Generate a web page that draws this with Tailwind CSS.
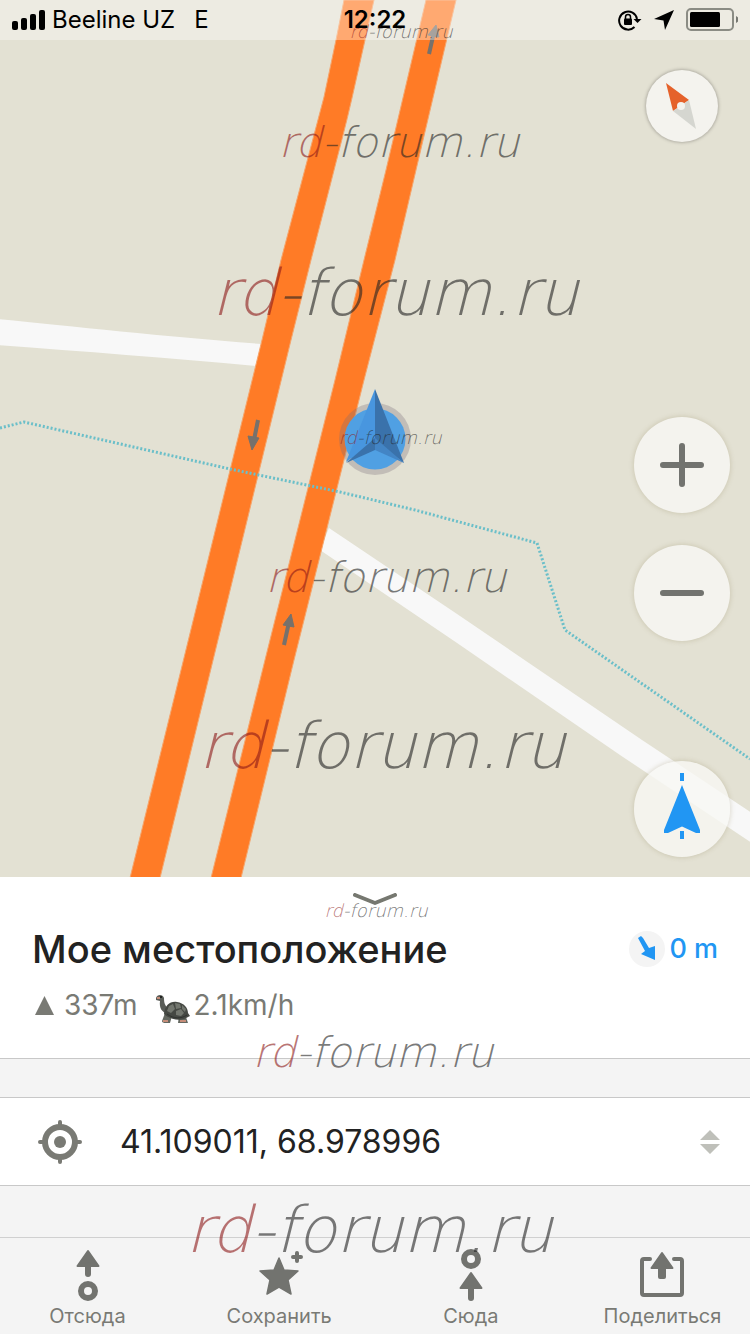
<!DOCTYPE html>
<html lang="ru">
<head>
<meta charset="utf-8">
<meta name="viewport" content="width=device-width, initial-scale=1">
<title>Мое местоположение</title>
<script src="https://cdn.jsdelivr.net/npm/@tailwindcss/browser@4"></script>
</head>
<body class="bg-[#f4f4f4] font-[Inter,'Noto_Sans',sans-serif] text-[#222]">
<div class="relative flex min-h-screen flex-col overflow-hidden">

  <!-- Map -->
  <main class="relative flex flex-1 flex-col bg-[#e3e1d3]">
    <svg class="absolute inset-0 h-full w-full" viewBox="0 0 750 877" preserveAspectRatio="xMidYMid slice" aria-hidden="true">
      <path d="M-2 319C70 326 170 337 262 344L257 366C170 358 80 351-2 345Z" fill="#f8f8f8"/>
      <path d="M329 528L460 616L642 740L752 813V843L620 755L460 645L320 550Z" fill="#f8f8f8"/>
      <g fill="#ff7b26" stroke="#f5a56c" stroke-width="1">
        <path d="M344 0H374L365 40L352 98C346 125 338 154 331 182L311 260L291 340L160 878H130L262 340L281 260L324 97L336 40Z"/>
        <path d="M426 0H456L416 170L395 260L364 380L294 660L241 878H211L265 660L335 380L364 260L386 170Z"/>
      </g>
      <path d="M0 428L24 422L230 469L340 492L415 510L537 543L565 630L750 759" fill="none" stroke="#6bbfc9" stroke-width="3" stroke-dasharray="2 2"/>
      <g fill="#77716b" stroke="#77716b">
        <path d="M258 420L254 440" stroke-width="4"/><path d="M248 436L259 438L252 450Z" stroke-width="1"/>
        <path d="M284 645L289 622" stroke-width="4"/><path d="M283 625L294 627L291 614Z" stroke-width="1"/>
        <path d="M429 54L434 32" stroke-width="4"/><path d="M428 35L439 37L436 25Z" stroke-width="1"/>
      </g>
      <circle cx="375" cy="439" r="36" fill="#776b78" fill-opacity=".3"/>
      <circle cx="375" cy="439" r="30.500" fill="#50a0e3"/>
      <path d="M375 389L346 462L375 441Z" fill="#4896df"/>
      <path d="M375 389L404 463L375 441Z" fill="#3a72ab"/>
      <path d="M346 463L375 438V450Z" fill="#3a72ab"/>
      <path d="M375 438L404 463L375 450Z" fill="#4385c5"/>
    </svg>

    <header class="relative grid h-10 grid-cols-[1fr_auto_1fr] items-center bg-white/35 px-3 text-[24px] leading-8 text-black">
      <div class="flex items-center gap-[7px]">
        <svg width="33" height="20" viewBox="0 0 33 20" aria-hidden="true"><rect y="11" width="6" height="9" rx="2"/><rect x="9" y="8" width="6" height="12" rx="2"/><rect x="18" y="4" width="6" height="16" rx="2"/><rect x="27" width="6" height="20" rx="2"/></svg>
        <span>Beeline UZ</span><span class="pl-3">E</span>
      </div>
      <time class="font-semibold">12:22</time>
      <div class="flex items-center justify-end gap-3">
        <svg width="24" height="22" viewBox="0 0 24 22" fill="none" stroke="#000" stroke-width="2" aria-hidden="true"><path d="M16.500 18A9 9 0 1 1 19 10"/><path d="M15.500 10H23.500L19.500 14Z" fill="#000" stroke="none"/><rect x="6" y="9.500" width="8" height="6.500" rx="1" fill="#000" stroke="none"/><path d="M7.500 10V8A2.500 2.500 0 0 1 12.500 8V10" stroke-width="1.500"/></svg>
        <svg width="20" height="20" viewBox="0 0 20 20" aria-hidden="true"><path d="M20 0L11 20L9.500 10.500L0 9Z"/></svg>
        <svg width="52" height="24" viewBox="0 0 52 24" aria-hidden="true"><rect x="1" y="1" width="46" height="21" rx="4" fill="none" stroke="#8b8c84" stroke-width="2"/><rect x="4" y="4" width="30" height="15" rx="1.500"/><path d="M50 8Q56 11.500 50 15Z" fill="#777872"/></svg>
      </div>
    </header>

    <div class="relative mr-5 ml-auto flex w-24 flex-1 flex-col items-center pt-[30px] pb-5">
      <button aria-label="Компас" class="size-[72px] rounded-full bg-[#f4f3ee] shadow-[0_0_3px_1px_rgba(90,85,80,0.35)]">
        <svg viewBox="0 0 72 72" aria-hidden="true"><path d="M20 13L43 30L27 41Z" fill="#e5622b"/><path d="M27 41L43 30L50 59Z" fill="#d5d6d0"/><circle cx="35" cy="36" r="4" fill="#f4f3ee"/></svg>
      </button>
      <div class="mt-auto flex flex-col gap-8">
        <button aria-label="Приблизить" class="size-24 rounded-full bg-[#f4f3ee] shadow-[0_0_4px_1px_rgba(150,140,100,0.25)]">
          <svg viewBox="0 0 96 96" stroke="#72736f" stroke-width="6" stroke-linecap="round" aria-hidden="true"><path d="M29 48H67M48 29V67"/></svg>
        </button>
        <button aria-label="Отдалить" class="size-24 rounded-full bg-[#f4f3ee] shadow-[0_0_4px_1px_rgba(150,140,100,0.25)]">
          <svg viewBox="0 0 96 96" stroke="#72736f" stroke-width="6" stroke-linecap="round" aria-hidden="true"><path d="M29 48H67"/></svg>
        </button>
      </div>
      <button aria-label="Моя позиция" class="mt-[120px] size-24 rounded-full bg-[#f8f7f4]/80 shadow-[0_0_4px_1px_rgba(150,140,100,0.25)]">
        <svg viewBox="0 0 96 96" fill="#2196f3" aria-hidden="true"><path d="M46 12H50V20H46ZM46 70H50V78H46ZM48 24L66 69V72H62L48 65.500L34 72H30V69Z"/></svg>
      </button>
    </div>
  </main>

  <!-- Place details -->
  <section class="flex flex-col border-b border-[#c8c8c8] bg-white px-8 pb-[35px]">
    <button aria-label="Свернуть" class="mx-auto flex h-12 items-start pt-4">
      <svg width="46" height="13" viewBox="0 0 46 13" fill="none" stroke="#767870" stroke-width="4" stroke-linecap="round" stroke-linejoin="round" aria-hidden="true"><path d="M3 2L23 10L43 2"/></svg>
    </button>
    <div class="flex items-center justify-between">
      <h1 class="text-[38px] leading-12 font-medium">Мое местоположение</h1>
      <div class="flex items-center gap-1 text-[27px] font-medium text-[#2196f3]">
        <svg width="36" height="36" viewBox="0 0 36 36" aria-hidden="true"><circle cx="18" cy="18" r="18" fill="#f4f4f4"/><path d="M9 7L12 5L14 7L20 17L26 15V29L12 23L16 20Z" fill="#2196f3"/></svg>
        <span>0 m</span>
      </div>
    </div>
    <div class="mt-[14px] flex h-9 items-center text-[28px] text-[#797a74]">
      <svg class="mr-[10px] ml-[3px]" width="19" height="19" viewBox="0 0 19 19" fill="#797a74" aria-hidden="true"><path d="M9.500 0L19 19H0Z"/></svg>
      <span>337m</span>
      <svg class="mt-2 mr-1 ml-4" width="36" height="30" viewBox="0 0 36 30" aria-hidden="true">
        <path d="M2 4C3 0 9 0 10 4C10 9 11 12 15 15L13 20C8 18 5 14 6 7L2 6Z" fill="#5a5d58"/>
        <path d="M11 19L8 27Q8 29 12 29H16L18 22M25 22L24 29H34L31 20" fill="#646861"/>
        <path d="M10 20C11 11 16 7 23 8C30 9 34 14 34 19L36 22L30 25C24 27 15 25 10 20Z" fill="#454843"/>
        <path d="M13 17L15 12L19 10L21 15L17 19ZM21 9L26 10L27 14L22 15ZM22 17L27 15L30 19L27 22L22 21ZM28 11L32 15L31 18L28 15Z" fill="#73776f"/>
        <path d="M13 20C20 25 27 25 33 21" fill="none" stroke="#303330"/>
        <path d="M3 4H6M9 27H14M26 27H32" stroke="#c68d79" stroke-width="2"/>
        <circle cx="7" cy="3" r="1" fill="#111"/>
      </svg>
      <span>2.1km/h</span>
    </div>
  </section>

  <section class="mt-[38px] flex h-[89px] items-center border-y border-[#c8c8c8] bg-white pr-[30px] pl-[38px]">
    <svg width="44" height="44" viewBox="0 0 44 44" fill="none" stroke="#797a74" aria-hidden="true"><path d="M22 2V7M22 37V42M2 22H7M37 22H42" stroke-width="4" stroke-linecap="round"/><circle cx="22" cy="22" r="15" stroke-width="6"/><circle cx="22" cy="22" r="6" fill="#797a74" stroke="none"/></svg>
    <span class="ml-[38px] text-[32px]">41.109011, 68.978996</span>
    <button aria-label="Формат координат" class="ml-auto">
      <svg width="20" height="24" viewBox="0 0 20 24" fill="#bfc0ba" aria-hidden="true"><path d="M0 10L10 0L20 10ZM0 14H20L10 24Z"/></svg>
    </button>
  </section>

  <nav class="mt-[51px] flex h-[97px] justify-between border-t border-[#d0d0d0] px-[29px] text-[20px] leading-6 text-[#797a74]">
    <button class="flex w-[117px] flex-col items-center pt-2">
      <svg width="48" height="58" viewBox="0 0 48 58" fill="#72736f" stroke="#72736f" stroke-linejoin="round" aria-hidden="true"><path d="M24 5L34.500 20H13.500Z" stroke-width="2"/><path d="M24 19V28" stroke-width="6" stroke-linecap="round"/><circle cx="24" cy="45" r="7" fill="none" stroke-width="6"/></svg>
      Отсюда
    </button>
    <button class="flex w-[117px] flex-col items-center pt-2">
      <svg width="48" height="58" viewBox="0 0 48 58" fill="#72736f" stroke="#72736f" stroke-linejoin="round" aria-hidden="true"><path d="M24 12L29 24L43 25L33 34L36 48L24 41L12 48L15 34L5 25L19 24Z" stroke-width="1.500"/><path d="M42 7V15M38 11H46" stroke-width="4" stroke-linecap="round"/></svg>
      Сохранить
    </button>
    <button class="flex w-[117px] flex-col items-center pt-2">
      <svg width="48" height="58" viewBox="0 0 48 58" fill="#72736f" stroke="#72736f" stroke-linejoin="round" aria-hidden="true"><circle cx="24" cy="13" r="7" fill="none" stroke-width="6"/><path d="M24 27L34.500 42H13.500Z" stroke-width="2"/><path d="M24 42V52" stroke-width="6" stroke-linecap="round"/></svg>
      Сюда
    </button>
    <button class="flex w-[117px] flex-col items-center pt-2">
      <svg width="48" height="58" viewBox="0 0 48 58" fill="#72736f" stroke="#72736f" stroke-linejoin="round" aria-hidden="true"><path d="M12 13H6Q4 13 4 15V47Q4 49 6 49H42Q44 49 44 47V15Q44 13 42 13H36" fill="none" stroke-width="4" stroke-linecap="round"/><path d="M24 7L34.500 22H13.500Z" stroke-width="2"/><path d="M20 22H28V31Q28 33 26 33H22Q20 33 20 31Z" stroke="none"/></svg>
      Поделиться
    </button>
  </nav>

  <!-- Watermarks lie over the whole screen -->
  <svg class="pointer-events-none absolute inset-0 h-full w-full font-['DejaVu_Sans_Light','DejaVu_Sans',sans-serif] font-extralight italic" viewBox="0 0 750 1334" fill="#222" fill-opacity=".6" text-anchor="middle">
    <g class="text-[18px]">
      <text x="401" y="38"><tspan fill="#8c1717">rd</tspan>-forum.ru</text>
      <text x="390" y="444"><tspan fill="#8c1717">rd</tspan>-forum.ru</text>
      <text x="376" y="917"><tspan fill="#8c1717">rd</tspan>-forum.ru</text>
    </g>
    <g class="text-[42px]">
      <text x="399" y="157"><tspan fill="#8c1717">rd</tspan>-forum.ru</text>
      <text x="386" y="592"><tspan fill="#8c1717">rd</tspan>-forum.ru</text>
      <text x="373" y="1067"><tspan fill="#8c1717">rd</tspan>-forum.ru</text>
    </g>
    <g class="text-[64px]">
      <text x="395" y="315"><tspan fill="#8c1717">rd</tspan>-forum.ru</text>
      <text x="382" y="768"><tspan fill="#8c1717">rd</tspan>-forum.ru</text>
      <text x="369" y="1252"><tspan fill="#8c1717">rd</tspan>-forum.ru</text>
    </g>
  </svg>
</div>
</body>
</html>
